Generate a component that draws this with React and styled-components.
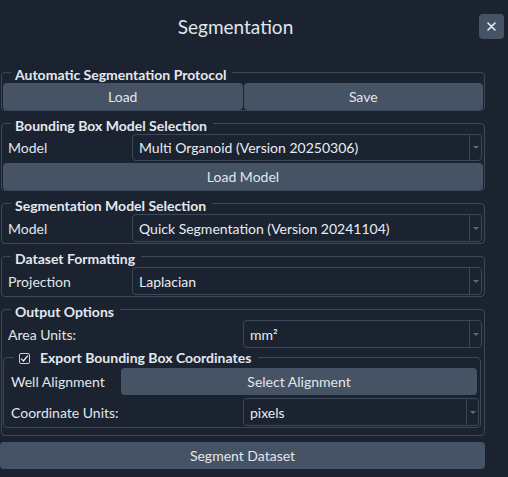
import React from 'react';
import styled, { createGlobalStyle } from 'styled-components';

const GlobalStyle = createGlobalStyle`
  html, body {
    margin: 0;
    padding: 0;
    background: #1b2330;
  }
  body {
    font-family: Lato, "Liberation Sans", sans-serif;
    color: #e1e6ec;
  }
`

export default function App() {
  return (
    <Dialog>
      <GlobalStyle />
      <Header>
        <Title>Segmentation</Title>
        <CloseButton aria-label="close">
          <svg width="9" height="9" viewBox="0 0 9 9">
            <path d="M1 1 L8 8 M8 1 L1 8" stroke="#e8ecf1" strokeWidth="1.6" strokeLinecap="round" />
          </svg>
        </CloseButton>
      </Header>

      <Body>
        <Group>
          <Legend>Automatic Segmentation Protocol</Legend>
          <Split>
            <Button>Load</Button>
            <Button>Save</Button>
          </Split>
        </Group>

        <Group>
          <Legend>Bounding Box Model Selection</Legend>
          <Row $label="129px">
            <Label>Model</Label>
            <Combo value="Multi Organoid (Version 20250306)" $h="27px" />
          </Row>
          <Button>Load Model</Button>
        </Group>

        <Group $bottom="1px">
          <Legend>Segmentation Model Selection</Legend>
          <Row $label="129px">
            <Label>Model</Label>
            <Combo value="Quick Segmentation (Version 20241104)" />
          </Row>
        </Group>

        <Group $bottom="1px">
          <Legend>Dataset Formatting</Legend>
          <Row $label="129px">
            <Label>Projection</Label>
            <Combo value="Laplacian" />
          </Row>
        </Group>

        <Group $bottom="7px">
          <Legend>Output Options</Legend>
          <Row $label="240px">
            <Label>Area Units:</Label>
            <Combo value="mm²" />
          </Row>
          <Group $inner $bottom="1px">
            <Legend $inner>
              <Check>
                <svg width="9" height="9" viewBox="0 0 9 9">
                  <path d="M1.2 4.6 L3.4 6.9 L7.8 1.6" stroke="#eef1f5" strokeWidth="1.3" fill="none" />
                </svg>
              </Check>
              Export Bounding Box Coordinates
            </Legend>
            <Row $label="117px" $indent="7px">
              <Label>Well Alignment</Label>
              <Button $trail="3px">Select Alignment</Button>
            </Row>
            <Row $label="239px" $indent="7px">
              <Label>Coordinate Units:</Label>
              <Combo value="pixels" $trail="1px" />
            </Row>
          </Group>
        </Group>

        <WideButton>Segment Dataset</WideButton>
      </Body>
    </Dialog>
  );
}

function Combo({ value, $trail, $h }) {
  return (
    <ComboBox $trail={$trail} $h={$h}>
      <ComboValue>{value}</ComboValue>
      <ComboArrow />
    </ComboBox>
  );
}

const Dialog = styled.div`
  width: 508px;
  height: 477px;
  background: #1b2330;
  overflow: hidden;
`

const Header = styled.div`
  height: 61px;
  box-sizing: border-box;
  padding: 14px 4px 0 0;
  display: grid;
  grid-template-columns: 1fr 25px;
  align-items: start;
`

const Title = styled.div`
  margin-right: 8px;
  text-align: center;
  font-size: 19px;
  line-height: 25px;
  color: #e1e6ec;
`

const CloseButton = styled.button`
  width: 25px;
  height: 25px;
  border: 0;
  border-radius: 4px;
  background: #465365;
  display: flex;
  align-items: center;
  justify-content: center;
  padding: 0;
`

const Body = styled.div`
  width: 485px;
  display: flex;
  flex-direction: column;
  gap: 1px;
`

const Group = styled.fieldset`
  margin: ${p => (p.$inner ? '-2px 2px 0 0' : '0 0 0 1px')};
  min-width: 0;
  box-sizing: border-box;
  border: 1px solid #3c4859;
  border-radius: 4px;
  padding: ${p => (p.$inner ? '2px 0' : '0 1px')} ${p => p.$bottom || '0px'};
  display: flex;
  flex-direction: column;
  gap: ${p => (p.$inner ? '3px' : '2px')};
`

const Legend = styled.legend`
  margin-left: ${p => (p.$inner ? '10px' : '8px')};
  padding: ${p => (p.$inner ? '2px 7px 0 5px' : '5px 6px 0 4px')};
  font-size: 14px;
  line-height: ${p => (p.$inner ? '16px' : '17px')};
  font-weight: 700;
  color: #e4e8ee;
  display: flex;
  align-items: center;
  gap: 10px;
`

const Check = styled.span`
  width: 11px;
  height: 11px;
  box-sizing: border-box;
  border: 1px solid #c9cfd8;
  border-radius: 2px;
  display: inline-flex;
  align-items: center;
  justify-content: center;
  margin-top: 1px;
`

const Split = styled.div`
  display: grid;
  grid-template-columns: 1fr 1fr;
  gap: 1px;
`

const Button = styled.button`
  height: 27px;
  margin-right: ${p => p.$trail || '0'};
  border: 0;
  border-radius: 4px;
  background: #465365;
  color: #e1e6ec;
  font-family: Lato, "Liberation Sans", sans-serif;
  font-size: 14px;
  padding: 0;
`

const WideButton = styled(Button)`
  margin-top: 5px;
  width: 485px;
`

const Row = styled.div`
  display: grid;
  grid-template-columns: ${p => p.$label} 1fr;
  align-items: center;

  & > span:first-child {
    padding-left: ${p => p.$indent || '5px'};
  }
`

const Label = styled.span`
  font-size: 14px;
  color: #e1e6ec;
  white-space: nowrap;
`

const ComboBox = styled.div`
  height: ${p => p.$h || '28px'};
  box-sizing: border-box;
  margin-right: ${p => p.$trail || '1px'};
  border: 1px solid #3c4859;
  border-radius: 4px;
  display: flex;
  align-items: stretch;
`

const ComboValue = styled.span`
  flex: 1;
  padding-left: 6px;
  display: flex;
  align-items: center;
  font-size: 14px;
  color: #e8ecf1;
  white-space: nowrap;
  overflow: hidden;
`

const ComboArrow = styled.span`
  width: 11px;
  border-left: 1px solid #3c4859;
  display: flex;
  align-items: center;
  justify-content: center;

  &::after {
    content: '';
    border-left: 3px solid transparent;
    border-right: 3px solid transparent;
    border-top: 3px solid #5f6b7d;
  }
`
